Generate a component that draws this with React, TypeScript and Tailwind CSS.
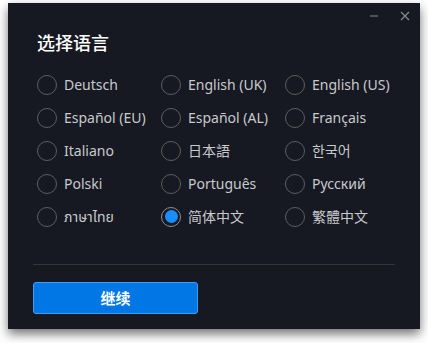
import React, { useState } from "react";

const langs = [
  "Deutsch", "English (UK)", "English (US)",
  "Español (EU)", "Español (AL)", "Français",
  "Italiano", "日本語", "한국어",
  "Polski", "Português", "Русский",
  "ภาษาไทย", "简体中文", "繁體中文",
];

const font = { fontFamily: '"Noto Sans", "Noto Sans CJK SC", "Noto Sans CJK KR", "Noto Sans Thai", "DejaVu Sans", sans-serif' };

export default function App() {
  const [sel, setSel] = useState("简体中文");
  return (
    <div className="w-[428px] h-[343px] bg-white pt-[3px] pl-[8px]" style={font}>
      <div className="w-[412px] h-[326px] bg-[#161922] shadow-[0_5px_10px_rgba(0,0,0,0.55)] flex flex-col">
        <div className="flex justify-end pt-[5px] pr-[7px] gap-[15px]">
          <div className="w-[16px] h-[16px] flex items-center justify-center">
            <svg width="10" height="2" viewBox="0 0 10 2"><line x1="1" y1="1" x2="9" y2="1" stroke="#8a8c90" strokeWidth="1" /></svg>
          </div>
          <div className="w-[16px] h-[16px] flex items-center justify-center">
            <svg width="10" height="10" viewBox="0 0 10 10"><path d="M1 1 L9 9 M9 1 L1 9" stroke="#8a8c90" strokeWidth="1.1" /></svg>
          </div>
        </div>
        <div className="px-[25px]">
          <div className="mt-[6px] pl-[4px] text-[18px] leading-[24px] text-white font-medium" style={{ fontFamily: '"Noto Sans CJK SC", sans-serif' }}>选择语言</div>
          <div className="mt-[14px] pl-[4px] grid grid-cols-[124px_124px_124px]">
            {langs.map((l) => {
              const on = l === sel;
              return (
                <button key={l} onClick={() => setSel(l)} className="h-[33px] flex items-center gap-[7px] text-left">
                  <span className={`w-[20px] h-[20px] rounded-full border-[1.5px] flex items-center justify-center shrink-0 ${on ? "border-[#8d8f94]" : "border-[#5c5e63]"}`}>
                    {on && <span className="w-[13px] h-[13px] rounded-full bg-[#1a8dff]" />}
                  </span>
                  <span className="text-[14px] leading-[20px] text-[#c8c9cc] whitespace-nowrap">{l}</span>
                </button>
              );
            })}
          </div>
          <div className="mt-[31px] h-px bg-[#34363b]" />
          <button className="mt-[17px] w-[165px] h-[32px] rounded-[3px] bg-[#0077e4] border border-[#3d9cff] text-white text-[15px] font-bold flex items-center justify-center" style={{ fontFamily: '"Noto Sans CJK SC", sans-serif' }}>
            继续
          </button>
        </div>
      </div>
    </div>
  );
}
